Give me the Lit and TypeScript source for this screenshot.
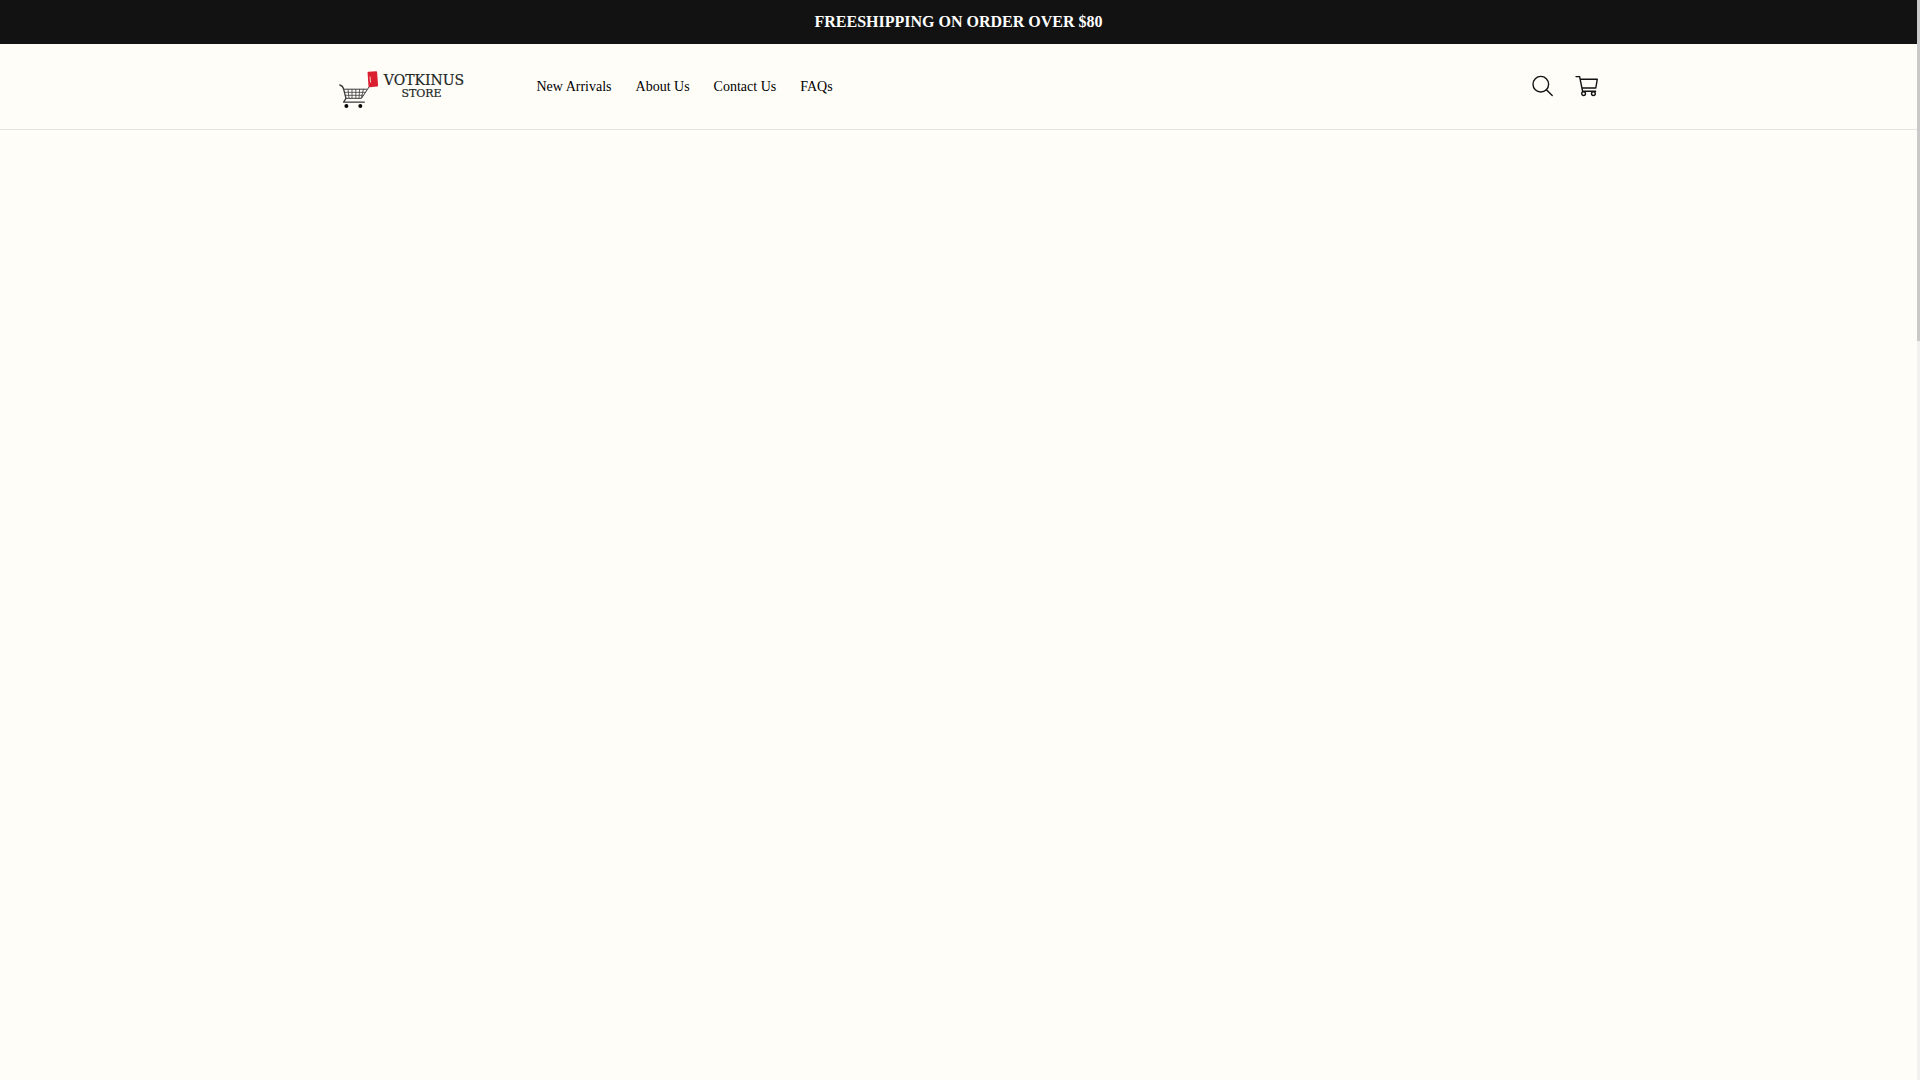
import { LitElement, html, css } from "lit";
import { customElement } from "lit/decorators.js";

const LINKS = ["New Arrivals", "About Us", "Contact Us", "FAQs"];

@customElement("store-logo")
class StoreLogo extends LitElement {
  static styles = css`
    :host { display: block; }
    .logo { display: block; width: 160px; height: 48px; }
    .word { font-family: "DejaVu Serif", serif; fill: #20261f; stroke: #20261f; stroke-width: 0.2; text-anchor: middle; }
    .name { font-size: 14px; }
    .kind { font-size: 11px; }
  `;
  render() {
    return html`
      <svg class="logo" viewBox="320 66 160 48" role="img" aria-label="Votkinus Store">
        <g fill="none" stroke="#3a3a3a" stroke-width="1" stroke-linecap="round" stroke-linejoin="round">
          <path d="M338.8 86C341 86.6 342.2 88.2 342.6 90L345 99.3L342.6 103.2H363.3" stroke-width="1.3" />
          <path d="M342.6 90.2H365.5M345 99.3H360.5L368 88" />
          <path d="M343.6 93.3H364.3M344.3 96.3H362.3" stroke-width=".8" />
          <path d="M347 90.4L348 99M351 90.4V99M354.8 90.4V99M358.6 90.4L358 99M362.4 90.4L360.4 98.6" stroke-width=".8" />
        </g>
        <circle cx="345.4" cy="107" r="2" fill="#080808" />
        <circle cx="359.3" cy="107" r="2" fill="#080808" />
        <rect x="367" y="72.5" width="9.6" height="15.4" rx="1" fill="#d91f30" transform="rotate(-4 371.6 80)" />
        <path d="M369 77.5L369.6 83.5" stroke="#f9c9c9" stroke-width="1" />
        <text class="word name" x="423" y="85.5">VOTKINUS</text>
        <text class="word kind" x="420.5" y="98">STORE</text>
      </svg>
    `;
  }
}

@customElement("app-root")
class AppRoot extends LitElement {
  static styles = css`
    :host {
      display: flex;
      min-height: 100vh;
      background: #fffdf8;
      color: #000;
      font-family: "Liberation Serif", serif;
    }
    .page { flex: 1; min-width: 0; }
    .announcement {
      margin: 0;
      padding: 12px 24px;
      background: #121212;
      color: #fff;
      font-size: 16px;
      line-height: 20px;
      font-weight: 700;
      text-align: center;
    }
    .header { border-bottom: 1px solid #e5e4e2; }
    .bar {
      display: flex;
      align-items: center;
      box-sizing: border-box;
      max-width: 1280px;
      height: 85px;
      margin: 0 auto;
      padding: 0 1px 0 2px;
    }
    .home { display: block; margin-top: 5px; }
    .menu {
      display: flex;
      gap: 24px;
      margin: 0 0 0 56px;
      padding: 0;
      list-style: none;
      font-size: 14px;
      line-height: 20px;
    }
    .menu a { color: inherit; text-decoration: none; white-space: nowrap; }
    .tools { display: flex; gap: 20px; margin: 0 0 2px auto; }
    .tool {
      display: block;
      padding: 0;
      border: 0;
      background: none;
      color: #121212;
      cursor: pointer;
    }
    .icon {
      display: block;
      width: 24px;
      height: 24px;
      fill: none;
      stroke: currentColor;
      stroke-width: 1.4;
      stroke-linecap: round;
      stroke-linejoin: round;
    }
    .track { width: 3px; background: #f1f1f1; }
    .thumb { height: 341px; background: #c9c9c9; }
  `;
  render() {
    return html`
      <div class="page">
        <p class="announcement">FREESHIPPING ON ORDER OVER $80</p>
        <header class="header">
          <div class="bar">
            <a class="home" href="#"><store-logo></store-logo></a>
            <nav>
              <ul class="menu">
                ${LINKS.map((label) => html`<li><a href="#">${label}</a></li>`)}
              </ul>
            </nav>
            <div class="tools">
              <button class="tool" type="button" aria-label="Search">
                <svg class="icon" viewBox="0 0 24 24">
                  <circle cx="10.8" cy="10.2" r="7.8" />
                  <path d="M16.4 15.8L22.2 21.6" />
                </svg>
              </button>
              <button class="tool" type="button" aria-label="Cart">
                <svg class="icon" viewBox="0 0 24 24">
                  <path d="M2 2.6H5.6L8.6 17.3H21.6M6.3 5.2H23.3L21.8 14H8" />
                  <circle cx="9.6" cy="19.6" r="1.9" />
                  <circle cx="19.4" cy="19.6" r="1.9" />
                </svg>
              </button>
            </div>
          </div>
        </header>
        <main></main>
      </div>
      <div class="track"><div class="thumb"></div></div>
    `;
  }
}
